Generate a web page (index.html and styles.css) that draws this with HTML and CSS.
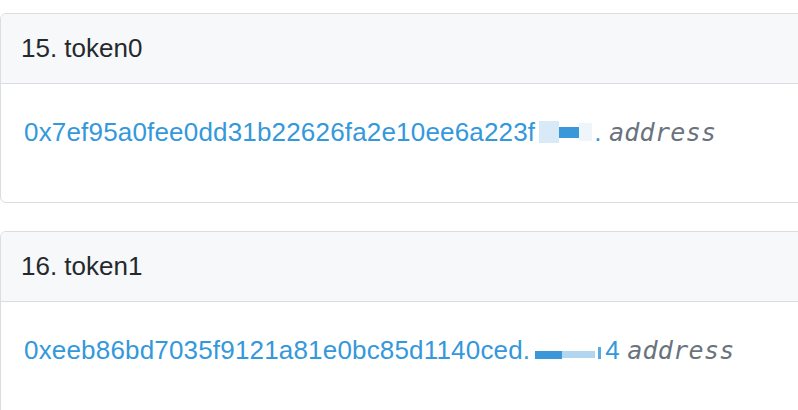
FILE: index.html
```html
<!DOCTYPE html>
<html>
<head>
<meta charset="utf-8">
<link rel="stylesheet" href="styles.css">
</head>
<body>
<div class="list">
  <div class="card">
    <div class="card-header">15. token0</div>
    <div class="card-body">
      <a class="addr" href="#">0x7ef95a0fee0dd31b22626fa2e10ee6a223f<span class="redact r1"><span class="blk light"></span><span class="blk dark"></span><span class="blk pale"></span></span>.</a>
      <span class="type">address</span>
    </div>
  </div>
  <div class="card">
    <div class="card-header">16. token1</div>
    <div class="card-body">
      <a class="addr" href="#">0xeeb86bd7035f9121a81e0bc85d1140ced.<span class="redact r2"><span class="band dark"></span><span class="band light"></span><span class="tick"></span></span>4</a>
      <span class="type">address</span>
    </div>
  </div>
</div>
</body>
</html>
```

FILE: styles.css
```css
html, body {
  margin: 0;
  padding: 0;
  background: #ffffff;
  overflow: hidden;
}

.list {
  width: 830px;
  padding-top: 13px;
  display: flex;
  flex-direction: column;
  gap: 28px;
  font-family: "Liberation Sans", Arial, sans-serif;
}

.card {
  border: 1px solid #dcdde0;
  border-radius: 6px;
  background: #ffffff;
  overflow: hidden;
}

.card-header {
  height: 69px;
  display: flex;
  align-items: center;
  padding: 0 20px;
  background: #f7f8fa;
  border-bottom: 1px solid #dcdde0;
  font-size: 26px;
  color: #25292e;
}

.card-body {
  height: 118px;
  box-sizing: border-box;
  padding: 33px 23px 0;
  font-size: 26px;
  line-height: 30px;
  white-space: nowrap;
}

.addr {
  color: #3498db;
  text-decoration: none;
  letter-spacing: 0.18px;
}

.type {
  font-family: "DejaVu Sans Mono", monospace;
  font-style: italic;
  font-size: 25px;
  letter-spacing: 0.3px;
  color: #6a737d;
}

.redact {
  display: inline-flex;
  vertical-align: baseline;
}

.r1 {
  height: 22px;
  align-items: center;
  margin-left: 4px;
  margin-right: 2px;
  vertical-align: -2px;
}

.r1 .blk {
  display: inline-block;
}

.r1 .light {
  width: 20px;
  height: 22px;
  background: #d8eaf7;
}

.r1 .dark {
  width: 20px;
  height: 11px;
  background: #3a98d9;
}

.r1 .pale {
  width: 13px;
  height: 18px;
  background: #eef5fb;
}

.r2 {
  height: 16px;
  align-items: flex-end;
  box-sizing: border-box;
  padding-bottom: 3px;
  margin-left: 5px;
  margin-right: 0;
}

.r2 .band {
  display: inline-block;
}

.r2 .dark {
  width: 27px;
  height: 8px;
  background: #3a98d9;
}

.r2 .light {
  width: 33px;
  height: 7px;
  margin-bottom: 1px;
  background: #b3d6f0;
}

.r2 .tick {
  display: inline-block;
  width: 3px;
  height: 12px;
  margin-left: 3px;
  background: #5aa9e0;
  margin-right: 4px;
}
```
